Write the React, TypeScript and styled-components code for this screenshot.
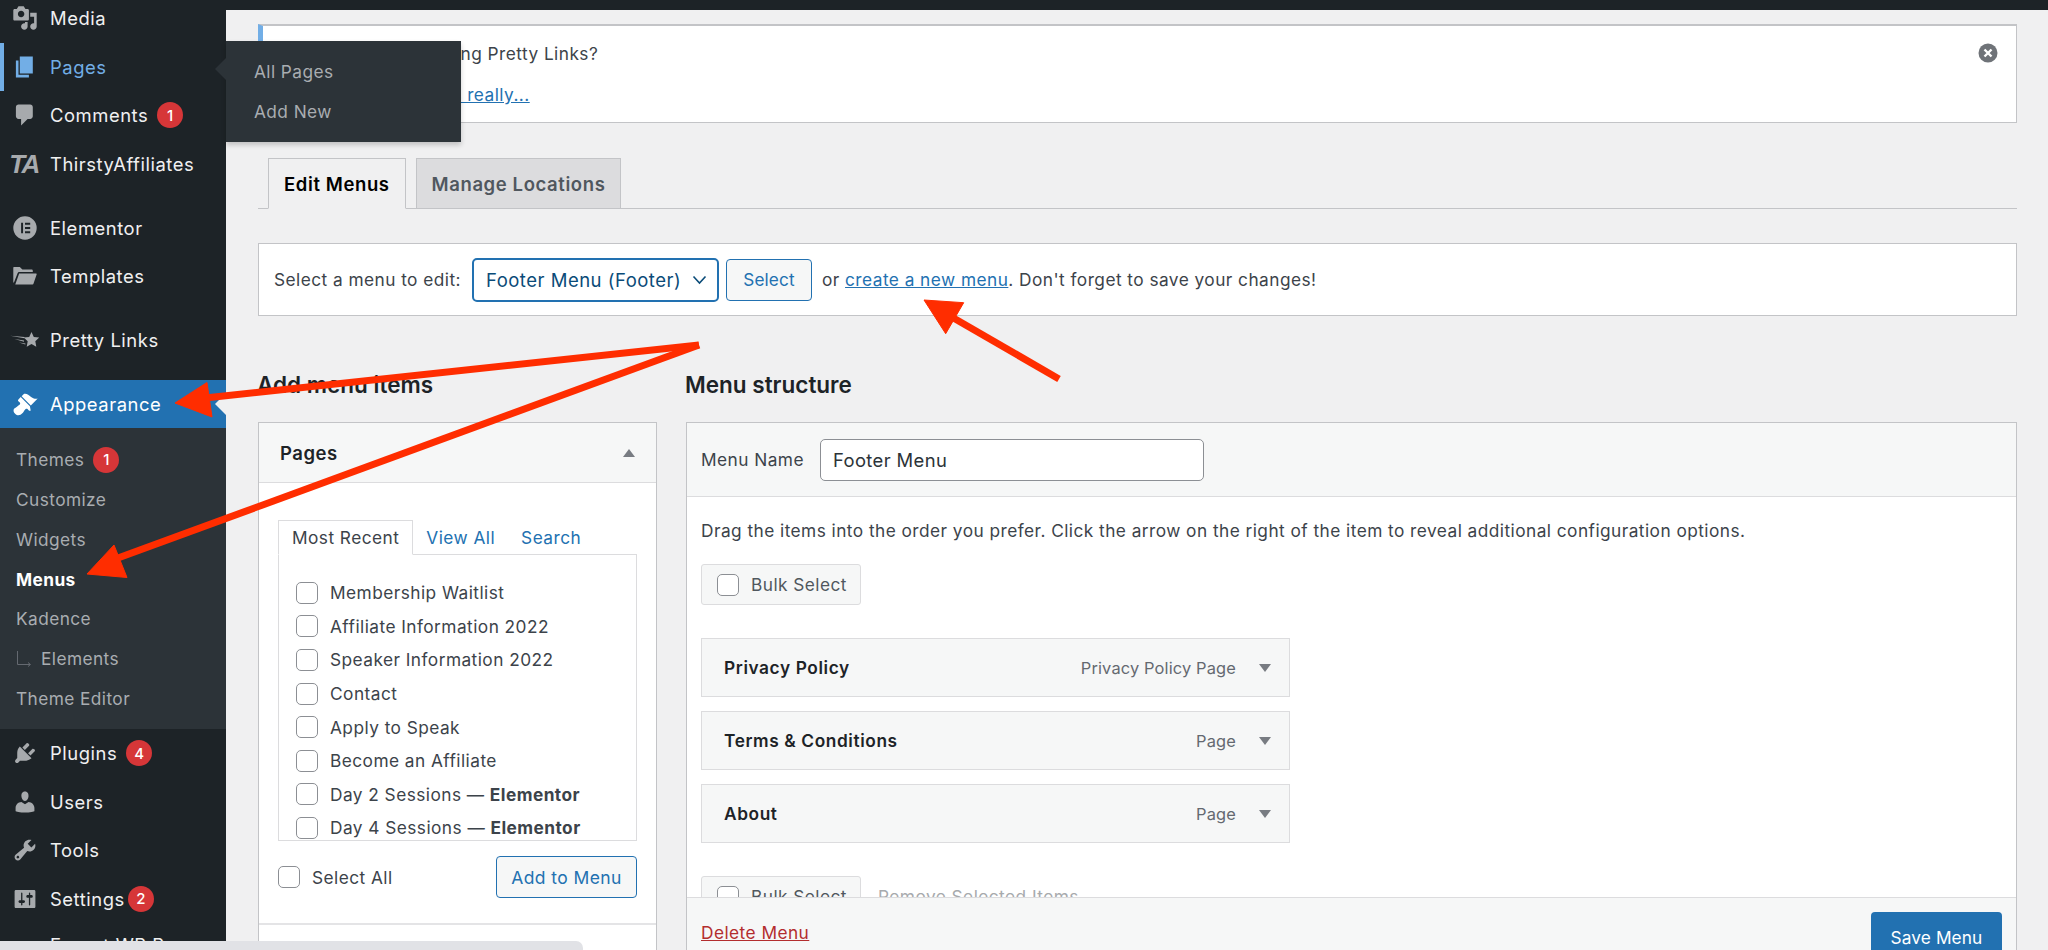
import React from "react";
import styled, { createGlobalStyle } from "styled-components";

const Global = createGlobalStyle`
  html, body { margin: 0; padding: 0; background: #f0f0f1; overflow: hidden; }
  * { box-sizing: border-box; }
  body { font-family: Inter, "Noto Sans", "Liberation Sans", sans-serif; -webkit-font-smoothing: antialiased; }
`;

const Page = styled.div`
  position: relative;
  width: 2048px;
  height: 950px;
  overflow: hidden;
  background: #f0f0f1;
  display: flex;
  flex-direction: column;
`;
const TopBar = styled.div`
  height: 10px;
  flex: none;
  background: #1d2327;
`;
const Shell = styled.div`
  display: flex;
  flex: 1;
  min-height: 0;
`;
const Sidebar = styled.nav`
  width: 226px;
  flex: none;
  background: #1d2327;
`;
const MenuRow = styled.div<{ $active?: boolean; $current?: boolean; $first?: boolean; $sep?: number }>`
  position: relative;
  height: 48.5px;
  display: flex;
  align-items: center;
  margin-top: ${(p) => (p.$first ? "-16px" : p.$sep ? `${p.$sep}px` : "0")};
  font-size: 18.4px;
  letter-spacing: 0.55px;
  color: ${(p) => (p.$current ? "#72aee6" : "#f0f0f1")};
  background: ${(p) => (p.$active ? "#2271b1" : "transparent")};
  ${(p) => (p.$active ? "color: #fff;" : "")}
  ${(p) => (p.$current ? "box-shadow: inset 4px 0 0 #72aee6;" : "")}
  ${(p) =>
    p.$active
      ? `&::after { content: ""; position: absolute; right: 0; top: 50%; margin-top: -11px; border: 11px solid transparent; border-right-color: #f0f0f1; border-left: 0; }`
      : ""}
`;
const IconSlot = styled.span`
  width: 50px;
  flex: none;
  display: flex;
  justify-content: center;
  padding-right: 1px;
`;
const Badge = styled.span<{ $gap?: number }>`
  width: 26px;
  height: 26px;
  border-radius: 50%;
  background: #d63638;
  color: #fff;
  font-size: 15px;
  font-weight: 500;
  letter-spacing: 0;
  display: inline-flex;
  align-items: center;
  justify-content: center;
  margin-left: ${(p) => p.$gap ?? 9}px;
  flex: none;
`;
const TaMark = styled.span`
  font-family: "Liberation Sans", sans-serif;
  font-weight: 700;
  font-style: italic;
  font-size: 26px;
  letter-spacing: -1.5px;
  color: #a7aaad;
  line-height: 1;
  margin-left: -1px;
`;
const SubMenu = styled.div`
  background: #2c3338;
  padding: 11.5px 0 10.9px;
`;
const SubRow = styled.div<{ $current?: boolean }>`
  height: 39.8px;
  display: flex;
  align-items: center;
  padding-left: 16px;
  font-size: 17.3px;
  letter-spacing: 0.42px;
  color: ${(p) => (p.$current ? "#fff" : "#a9adb1")};
  font-weight: ${(p) => (p.$current ? 700 : 400)};
`;
const SubIndent = styled.span`
  width: 25px;
  display: inline-flex;
  flex: none;
`;
const Flyout = styled.div`
  position: absolute;
  left: 226px;
  top: 41px;
  width: 235px;
  height: 101px;
  background: #2c3338;
  box-shadow: 0 3px 5px rgba(0, 0, 0, 0.2);
  padding: 11px 0 0 28px;
  z-index: 5;
  &::before {
    content: "";
    position: absolute;
    left: -11px;
    top: 17px;
    border: 11px solid transparent;
    border-right-color: #2c3338;
    border-left: 0;
  }
`;
const FlyoutLink = styled.div`
  height: 39.5px;
  display: flex;
  align-items: center;
  font-size: 17.3px;
  letter-spacing: 0.42px;
  color: #a9adb1;
`;

const Main = styled.main`
  flex: 1;
  min-width: 0;
  padding: 14px 31px 0 32px;
  font-size: 17.3px;
  letter-spacing: 0.45px;
  color: #3c434a;
`;
const Notice = styled.div`
  height: 99px;
  background: #fff;
  border: 1px solid #c3c4c7;
  border-left: 5px solid #72aee6;
  border-top-width: 2px;
  position: relative;
  padding: 18px 0 0 75px;
`;
const NoticeLine = styled.p`
  margin: 0 0 21px;
  line-height: 20px;
`;
const Anchor = styled.a`
  color: #2271b1;
  text-decoration: underline;
`;
const CloseButton = styled.span`
  position: absolute;
  right: 18px;
  top: 17px;
  width: 20px;
  height: 20px;
  display: flex;
`;
const TabBar = styled.div`
  display: flex;
  gap: 10px;
  height: 51px;
  margin-top: 35px;
  padding-left: 10px;
  border-bottom: 1px solid #c3c4c7;
`;
const Tab = styled.div<{ $on?: boolean }>`
  height: 51px;
  display: flex;
  align-items: center;
  padding: 0 15px;
  font-size: 18.5px;
  letter-spacing: 0.6px;
  font-weight: 600;
  border: 1px solid #c3c4c7;
  border-bottom: ${(p) => (p.$on ? "1px solid #f0f0f1" : "1px solid #c3c4c7")};
  background: ${(p) => (p.$on ? "#f0f0f1" : "#dcdcde")};
  color: ${(p) => (p.$on ? "#000" : "#50575e")};
`;
const SelectBar = styled.div`
  margin-top: 34px;
  height: 73px;
  background: #fff;
  border: 1px solid #c3c4c7;
  display: flex;
  align-items: center;
  padding-left: 15px;
`;
const MenuSelect = styled.div`
  width: 247px;
  height: 44px;
  margin-left: 11px;
  border: 2px solid #2271b1;
  border-radius: 5px;
  display: flex;
  align-items: center;
  justify-content: space-between;
  padding: 0 10px 0 12px;
  font-size: 18.5px;
  letter-spacing: 0.5px;
  color: #0a4b78;
`;
const SecondaryButton = styled.button`
  height: 42px;
  border: 1px solid #2271b1;
  border-radius: 4px;
  background: #f6f7f7;
  color: #2271b1;
  font: inherit;
  font-size: 17.2px;
  letter-spacing: 0.1px;
`;
const SelectButton = styled(SecondaryButton)`
  width: 86px;
  margin: 0 10px 0 7px;
`;
const Spacer = styled.span`
  display: inline-block;
  white-space: pre;
`;
const Columns = styled.div`
  display: flex;
  gap: 29px;
  margin-top: 51px;
`;
const LeftColumn = styled.section`
  width: 399px;
  flex: none;
`;
const RightColumn = styled.section`
  flex: 1;
  min-width: 0;
`;
const Heading = styled.h2`
  margin: 0 0 19px -1px;
  height: 36px;
  line-height: 36px;
  font-size: 22.5px;
  letter-spacing: 0;
  font-weight: 600;
  color: #1d2327;
`;
const Box = styled.div`
  background: #fff;
  border: 1px solid #c3c4c7;
  height: 600px;
`;
const AccordionHead = styled.div`
  height: 60px;
  background: #f6f7f7;
  border-bottom: 1px solid #dcdcde;
  display: flex;
  align-items: center;
  justify-content: space-between;
  padding: 0 21px;
  font-size: 18.5px;
  letter-spacing: 0.5px;
  font-weight: 600;
  color: #1d2327;
`;
const Triangle = styled.span<{ $up?: boolean }>`
  width: 0;
  height: 0;
  border-left: 6px solid transparent;
  border-right: 6px solid transparent;
  ${(p) => (p.$up ? "border-bottom: 8px solid #787c82;" : "border-top: 8px solid #787c82;")}
  flex: none;
`;
const AccordionBody = styled.div`
  padding: 37px 19px 0;
  height: 442px;
  border-bottom: 2px solid #e4e4e6;
`;
const PickTabs = styled.div`
  display: flex;
  height: 35px;
  align-items: stretch;
`;
const PickTab = styled.div<{ $on?: boolean }>`
  display: flex;
  align-items: center;
  padding: 0 ${(p) => (p.$on ? "13px" : "0")};
  margin-right: ${(p) => (p.$on ? "13px" : "26px")};
  color: ${(p) => (p.$on ? "#3c434a" : "#2271b1")};
  ${(p) =>
    p.$on
      ? "border: 1px solid #dcdcde; border-bottom: 1px solid #fff; position: relative; z-index: 1; height: 35px; background: #fff;"
      : ""}
`;
const PickBody = styled.div`
  margin-top: -1px;
  height: 287px;
  border: 1px solid #dcdcde;
  overflow: hidden;
  padding: 21px 0 0 17px;
`;
const PickRow = styled.label`
  height: 33.6px;
  display: flex;
  align-items: center;
  gap: 12px;
`;
const Check = styled.input.attrs({ type: "checkbox" })`
  appearance: none;
  width: 22px;
  height: 22px;
  margin: 0;
  flex: none;
  background: #fff;
  border: 1px solid #8c8f94;
  border-radius: 5px;
`;
const PickFooter = styled.div`
  margin-top: 15px;
  display: flex;
  align-items: center;
  justify-content: space-between;
`;
const SelectAll = styled.label`
  display: flex;
  align-items: center;
  gap: 12px;
`;
const AddButton = styled(SecondaryButton)`
  width: 141px;
  font-size: 17.5px;
  letter-spacing: 0.4px;
`;
const NameRow = styled.div`
  height: 74px;
  background: #f6f7f7;
  border-bottom: 1px solid #dcdcde;
  display: flex;
  align-items: center;
  padding: 0 14px;
`;
const NameInput = styled.input`
  width: 384px;
  height: 42px;
  margin-left: 16px;
  padding: 0 12px;
  background: #fff;
  border: 1px solid #8c8f94;
  border-radius: 5px;
  font: inherit;
  font-size: 18.4px;
  letter-spacing: 0.4px;
  color: #2c3338;
`;
const MenuBody = styled.div`
  height: 400px;
  overflow: hidden;
  padding: 0 14px;
`;
const Hint = styled.p`
  margin: 0;
  padding-top: 20px;
  line-height: 28px;
  height: 67px;
`;
const BulkRow = styled.div`
  display: flex;
  align-items: center;
  gap: 17px;
`;
const BulkBox = styled.label`
  width: 160px;
  height: 41px;
  background: #f6f7f7;
  border: 1px solid #dcdcde;
  border-radius: 3px;
  display: flex;
  align-items: center;
  gap: 12px;
  padding-left: 15px;
  color: #50575e;
`;
const MutedText = styled.span`
  color: #a7aaad;
`;
const ItemList = styled.div`
  margin: 33px 0 33px;
  display: flex;
  flex-direction: column;
  gap: 14px;
  width: 589px;
`;
const Item = styled.div`
  height: 59px;
  background: #f6f7f7;
  border: 1px solid #dcdcde;
  display: flex;
  align-items: center;
  padding: 0 18px 0 22px;
  font-weight: 600;
  font-size: 17.3px;
  letter-spacing: 0.6px;
  color: #1d2327;
`;
const ItemType = styled.span`
  margin-left: auto;
  margin-right: 23px;
  font-weight: 400;
  font-size: 16.4px;
  letter-spacing: 0.15px;
  color: #646970;
`;
const MenuFooter = styled.div`
  height: 100px;
  background: #f6f7f7;
  border-top: 1px solid #dcdcde;
  display: flex;
  justify-content: space-between;
  align-items: flex-start;
  padding: 14px 14px 0;
`;
const DeleteLink = styled.a`
  color: #b32d2e;
  text-decoration: underline;
  margin-top: 10px;
`;
const SaveButton = styled.button`
  width: 131px;
  height: 50px;
  background: #2271b1;
  border: 0;
  border-radius: 4px;
  color: #fff;
  font: inherit;
  font-size: 17.3px;
  letter-spacing: 0.1px;
`;
const BrowserStatus = styled.div`
  position: absolute;
  left: 0;
  bottom: 0;
  width: 583px;
  height: 9px;
  background: #e1e2e6;
  border-top-right-radius: 7px;
  z-index: 6;
`;
const Overlay = styled.svg`
  position: absolute;
  inset: 0;
  z-index: 7;
  pointer-events: none;
`;

const D = ({ d, color = "#a7aaad", size = 26 }: { d: string; color?: string; size?: number }) => (
  <svg width={size} height={size} viewBox="0 0 20 20" fill={color}>
    <path d={d} fillRule="evenodd" />
  </svg>
);

const P = {
  media:
    "M13 11V4c0-.55-.45-1-1-1h-1.67L9 1H5L3.67 3H2c-.55 0-1 .45-1 1v7c0 .55.45 1 1 1h10c.55 0 1-.45 1-1zM7 4.5c1.38 0 2.5 1.12 2.5 2.5S8.38 9.5 7 9.5 4.5 8.38 4.5 7 5.62 4.5 7 4.5zM14 6h5v10.5c0 1.38-1.12 2.5-2.5 2.5S14 17.88 14 16.5s1.12-2.5 2.5-2.5c.17 0 .34.02.5.05V9h-3V6zm-4 8.05V13h2v3.5c0 1.38-1.12 2.5-2.5 2.5S7 17.88 7 16.5 8.12 14 9.5 14c.17 0 .34.02.5.05z",
  pages: "M6 15V2h10v13H6zm-1 1h8v2H3V5h2v11z",
  comments: "M5 2h9c1.1 0 2 .9 2 2v7c0 1.1-.9 2-2 2h-2l-5 5v-5H5c-1.1 0-2-.9-2-2V4c0-1.1.9-2 2-2z",
  elementor:
    "M10 1a9 9 0 1 0 0 18 9 9 0 0 0 0-18zM7 6h1.5v8H7V6zm3 0h4v1.5h-4V6zm0 3.25h4v1.5h-4v-1.5zm0 3.25h4V14h-4v-1.5z",
  templates:
    "M1 3.5c0-.3.2-.5.5-.5H6l2 2h7c.6 0 1 .4 1 1v1H5.5c-.6 0-1 .3-1.2.8L1.5 15H1V3.5zM5.5 8h13c.4 0 .6.3.5.6L16.5 16c-.1.3-.3.5-.7.5H2.5L5.5 8z",
  appearance:
    "M14.48 11.06L7.41 3.99l1.5-1.5c.5-.56 2.3-.47 3.51.32 1.21.8 1.43 1.28 2.91 2.1 1.18.64 2.45 1.26 4.45.85zm-.71.71L6.7 4.7 4.93 6.47c-.39.39-.39 1.02 0 1.41l1.06 1.06c.39.39.39 1.03 0 1.42-.6.6-1.43 1.11-2.21 1.69-.35.26-.7.53-1.01.84C1.43 13.23.28 15.31 2.4 17.44c2.14 2.13 4.21.99 5.56-.36.31-.31.59-.66.85-1.01.58-.78 1.09-1.61 1.69-2.21.39-.39 1.02-.39 1.41 0l1.06 1.06c.39.39 1.02.39 1.41 0z",
  plugins:
    "M13.11 4.36L9.87 7.6 8 5.73l3.24-3.24c.35-.34 1.05-.2 1.56.32.52.51.66 1.21.31 1.55zm-8 1.77l.91-1.12 9.01 9.01-1.19.84c-.71.71-2.63 1.16-3.82 1.16H6.14L4.9 17.26c-.59.59-1.54.59-2.12 0-.59-.58-.59-1.53 0-2.12l1.24-1.24v-3.88c0-1.13.4-3.19 1.09-3.89zm7.26 3.97l3.24-3.24c.34-.35 1.04-.21 1.55.31.52.51.66 1.21.31 1.55l-3.24 3.25z",
  users:
    "M10 9.25c-2.27 0-2.73-3.44-2.73-3.44C7 4.02 7.82 2 9.97 2c2.16 0 2.98 2.02 2.71 3.81 0 0-.41 3.44-2.68 3.44zm0 2.57L12.72 10c2.39 0 4.52 2.33 4.52 4.53v2.49s-3.65 1.13-7.24 1.13c-3.65 0-7.24-1.13-7.24-1.13v-2.49c0-2.25 1.94-4.48 4.47-4.48z",
  tools:
    "M16.68 9.77c-1.34 1.34-3.3 1.67-4.95.99l-5.41 6.52c-.99.99-2.59.99-3.58 0s-.99-2.59 0-3.57l6.52-5.42c-.68-1.65-.35-3.61.99-4.95 1.28-1.28 3.12-1.62 4.72-1.06l-2.89 2.89 2.82 2.82 2.86-2.87c.53 1.58.18 3.39-1.08 4.65zM3.81 16.21c.4.39 1.04.39 1.43 0 .4-.4.4-1.04 0-1.43-.39-.4-1.03-.4-1.43 0-.39.39-.39 1.03 0 1.43z",
  settings:
    "M18 16V4c0-.55-.45-1-1-1H3c-.55 0-1 .45-1 1v12c0 .55.45 1 1 1h14c.55 0 1-.45 1-1zM8 11h1c.55 0 1 .45 1 1s-.45 1-1 1H8v1.5c0 .28-.22.5-.5.5s-.5-.22-.5-.5V13H6c-.55 0-1-.45-1-1s.45-1 1-1h1V5.5c0-.28.22-.5.5-.5s.5.22.5.5V11zm5-2h-1c-.55 0-1-.45-1-1s.45-1 1-1h1V5.5c0-.28.22-.5.5-.5s.5.22.5.5V7h1c.55 0 1 .45 1 1s-.45 1-1 1h-1v5.5c0 .28-.22.5-.5.5s-.5-.22-.5-.5V9z",
};

const PrettyLinksIcon = () => (
  <svg width="30" height="18" viewBox="0 0 30 18" fill="#a7aaad">
    <path d="M21.5 1l2.3 4.9 5.4.7-3.9 3.7 1 5.4-4.8-2.6-4.8 2.6 1-5.4-3.9-3.7 5.4-.7z" />
    <path d="M0 4.8l14.5 1.2v1.2zM4.5 8l9.5 1.6v1.2zM9 11.4l6.4 1v1z" />
  </svg>
);

const ElementsArrow = () => (
  <svg width="16" height="16" viewBox="0 0 16 16" fill="none" stroke="#646970" strokeWidth="1">
    <path d="M1.5 0v13.5H14M12 11.5l2.5 2-2.5 2" />
  </svg>
);

const Chevron = () => (
  <svg width="15" height="10" viewBox="0 0 15 10" fill="none" stroke="#0a4b78" strokeWidth="1.6">
    <path d="M1.5 1.5l6 6.5 6-6.5" />
  </svg>
);

const CloseIcon = () => (
  <svg width="20" height="20" viewBox="0 0 20 20">
    <circle cx="10" cy="10" r="9.5" fill="#6f7378" />
    <path d="M6.5 6.5l7 7M13.5 6.5l-7 7" stroke="#fff" strokeWidth="2.4" />
  </svg>
);

const pickItems: [string, string?][] = [
  ["Membership Waitlist"],
  ["Affiliate Information 2022"],
  ["Speaker Information 2022"],
  ["Contact"],
  ["Apply to Speak"],
  ["Become an Affiliate"],
  ["Day 2 Sessions — ", "Elementor"],
  ["Day 4 Sessions — ", "Elementor"],
];

const items = [
  ["Privacy Policy", "Privacy Policy Page"],
  ["Terms & Conditions", "Page"],
  ["About", "Page"],
];

export default function App() {
  return (
    <Page>
      <Global />
      <TopBar />
      <Shell>
        <Sidebar>
          <MenuRow $first>
            <IconSlot><D d={P.media} /></IconSlot>Media
          </MenuRow>
          <MenuRow $current>
            <IconSlot><D d={P.pages} color="#72aee6" /></IconSlot>Pages
          </MenuRow>
          <MenuRow>
            <IconSlot><D d={P.comments} /></IconSlot>Comments<Badge>1</Badge>
          </MenuRow>
          <MenuRow>
            <IconSlot><TaMark>TA</TaMark></IconSlot>ThirstyAffiliates
          </MenuRow>
          <MenuRow $sep={15.5}>
            <IconSlot><D d={P.elementor} /></IconSlot>Elementor
          </MenuRow>
          <MenuRow>
            <IconSlot><D d={P.templates} /></IconSlot>Templates
          </MenuRow>
          <MenuRow $sep={15}>
            <IconSlot><PrettyLinksIcon /></IconSlot>Pretty Links
          </MenuRow>
          <MenuRow $active $sep={15.75}>
            <IconSlot><D d={P.appearance} color="#fff" /></IconSlot>Appearance
          </MenuRow>
          <SubMenu>
            <SubRow>Themes<Badge>1</Badge></SubRow>
            <SubRow>Customize</SubRow>
            <SubRow>Widgets</SubRow>
            <SubRow $current>Menus</SubRow>
            <SubRow>Kadence</SubRow>
            <SubRow><SubIndent><ElementsArrow /></SubIndent>Elements</SubRow>
            <SubRow>Theme Editor</SubRow>
          </SubMenu>
          <MenuRow>
            <IconSlot><D d={P.plugins} /></IconSlot>Plugins<Badge>4</Badge>
          </MenuRow>
          <MenuRow>
            <IconSlot><D d={P.users} /></IconSlot>Users
          </MenuRow>
          <MenuRow>
            <IconSlot><D d={P.tools} /></IconSlot>Tools
          </MenuRow>
          <MenuRow>
            <IconSlot><D d={P.settings} /></IconSlot>Settings<Badge $gap={3}>2</Badge>
          </MenuRow>
          <MenuRow $sep={-2}>
            <IconSlot />Export WP Page
          </MenuRow>
        </Sidebar>
        <Main>
          <Notice>
            <NoticeLine>Are you enjoying Pretty Links?</NoticeLine>
            <NoticeLine><Anchor>Yes, I love this really...</Anchor></NoticeLine>
            <CloseButton><CloseIcon /></CloseButton>
          </Notice>
          <TabBar>
            <Tab $on>Edit Menus</Tab>
            <Tab>Manage Locations</Tab>
          </TabBar>
          <SelectBar>
            Select a menu to edit:
            <MenuSelect>Footer Menu (Footer)<Chevron /></MenuSelect>
            <SelectButton>Select</SelectButton>
            <Spacer>or </Spacer>
            <Anchor>create a new menu</Anchor>
            <Spacer>. Don't forget to save your changes!</Spacer>
          </SelectBar>
          <Columns>
            <LeftColumn>
              <Heading>Add menu items</Heading>
              <Box>
                <AccordionHead>Pages<Triangle $up /></AccordionHead>
                <AccordionBody>
                  <PickTabs>
                    <PickTab $on>Most Recent</PickTab>
                    <PickTab>View All</PickTab>
                    <PickTab>Search</PickTab>
                  </PickTabs>
                  <PickBody>
                    {pickItems.map(([a, b]) => (
                      <PickRow key={a + b}>
                        <Check />
                        <span>{a}{b && <strong>{b}</strong>}</span>
                      </PickRow>
                    ))}
                  </PickBody>
                  <PickFooter>
                    <SelectAll><Check />Select All</SelectAll>
                    <AddButton>Add to Menu</AddButton>
                  </PickFooter>
                </AccordionBody>
              </Box>
            </LeftColumn>
            <RightColumn>
              <Heading>Menu structure</Heading>
              <Box>
                <NameRow>
                  Menu Name
                  <NameInput defaultValue="Footer Menu" />
                </NameRow>
                <MenuBody>
                  <Hint>Drag the items into the order you prefer. Click the arrow on the right of the item to reveal additional configuration options.</Hint>
                  <BulkBox><Check />Bulk Select</BulkBox>
                  <ItemList>
                    {items.map(([t, k]) => (
                      <Item key={t}>
                        {t}
                        <ItemType>{k}</ItemType>
                        <Triangle />
                      </Item>
                    ))}
                  </ItemList>
                  <BulkRow>
                    <BulkBox><Check />Bulk Select</BulkBox>
                    <MutedText>Remove Selected Items</MutedText>
                  </BulkRow>
                </MenuBody>
                <MenuFooter>
                  <DeleteLink>Delete Menu</DeleteLink>
                  <SaveButton>Save Menu</SaveButton>
                </MenuFooter>
              </Box>
            </RightColumn>
          </Columns>
        </Main>
      </Shell>
      <Flyout>
        <FlyoutLink>All Pages</FlyoutLink>
        <FlyoutLink>Add New</FlyoutLink>
      </Flyout>
      <BrowserStatus />
      <Overlay width="2048" height="950" viewBox="0 0 2048 950">
        <g fill="#ff2d00" stroke="#ff2d00">
          <path d="M699 345L205 398" strokeWidth="7" fill="none" />
          <path d="M175 403L207 382.5L212 417z" strokeWidth="1" />
          <path d="M699 345L118 558" strokeWidth="7" fill="none" />
          <path d="M87 574L114 545L127 577.5z" strokeWidth="1" />
          <path d="M1059 379L950 316" strokeWidth="7" fill="none" />
          <path d="M924 300L963.7 302.7L945.7 333.7z" strokeWidth="1" />
        </g>
      </Overlay>
    </Page>
  );
}
